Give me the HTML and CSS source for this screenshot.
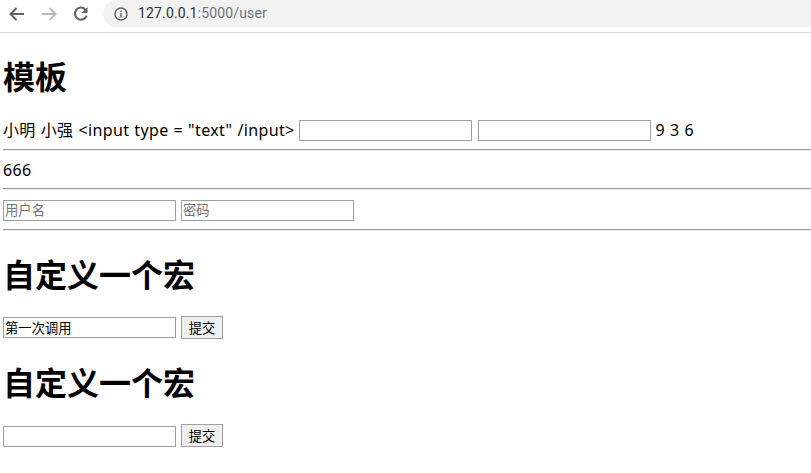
FILE: index.html
```html
<!DOCTYPE html>
<html lang="zh">
<head>
<meta charset="utf-8">
<title>user</title>
<link rel="stylesheet" href="styles.css">
</head>
<body>
<header class="toolbar">
  <svg class="nav-icon" viewBox="0 0 16 16"><path d="M15 8H1.5M7.5 2 1.5 8l6 6" class="stroke-dark"/></svg>
  <svg class="nav-icon" viewBox="0 0 16 16"><path d="M1 8h13.5M8.5 2l6 6-6 6" class="stroke-light"/></svg>
  <svg class="nav-icon" viewBox="0 0 16 16"><path d="M13.6 9.6A6 6 0 1 1 12.4 3.6" class="stroke-dark"/><path d="M14.5 1v6h-6z" class="fill-dark"/></svg>
  <div class="omnibox">
    <svg class="info-icon" viewBox="0 0 14 14"><circle cx="7" cy="7" r="6" class="stroke-info"/><path d="M7 6.2v4M7 3.6v1.5" class="stroke-info"/></svg>
    <span class="url"><span class="host">127.0.0.1</span>:5000/user</span>
  </div>
</header>
<main class="page">
  <h1>模板</h1>
  <div class="line"><span class="spaced">小明 小强 &lt;input type = "text" /input&gt;</span> <input type="text" class="field"> <input type="text" class="field"> <span class="spaced">9 3 6</span></div>
  <hr>
  <div class="line-plain"><span class="spaced">666</span></div>
  <hr>
  <div class="row row-fields"><input type="text" class="field" placeholder="用户名"><input type="text" class="field" placeholder="密码"></div>
  <hr>
  <h1>自定义一个宏</h1>
  <form class="row row-filled"><input type="text" class="field" value="第一次调用"><button type="button" class="submit">提交</button></form>
  <h1>自定义一个宏</h1>
  <form class="row row-empty"><input type="text" class="field"><button type="button" class="submit">提交</button></form>
</main>
</body>
</html>
```
FILE: styles.css
```css
html, body {
  margin: 0;
  padding: 0;
  background: #fff;
  overflow: hidden;
}
body {
  font-family: "Noto Sans", "Noto Sans CJK SC", sans-serif;
  font-size: 16px;
  line-height: 21px;
  color: #000;
}
.toolbar {
  height: 32px;
  display: flex;
  align-items: flex-start;
  border-bottom: 1px solid #dcdcdc;
}
.nav-icon {
  width: 16px;
  height: 16px;
  margin: 6px 7px 0 9px;
  flex: none;
}
.stroke-dark { fill: none; stroke: #5f6368; stroke-width: 2; }
.stroke-light { fill: none; stroke: #b9bbbe; stroke-width: 2; }
.fill-dark { fill: #5f6368; }
.stroke-info { fill: none; stroke: #5f6368; stroke-width: 1.5; }
.omnibox {
  flex: 1;
  height: 27px;
  margin-left: 7px;
  padding-left: 11px;
  background: #f2f2f2;
  border-radius: 14px 0 0 14px;
  display: flex;
  align-items: center;
  gap: 10px;
}
.info-icon { width: 14px; height: 14px; flex: none; }
.url {
  font-family: "Roboto", "Liberation Sans", sans-serif;
  font-size: 14px;
  letter-spacing: 0.15px;
  color: #70757a;
}
.host { color: #303134; }
.page { padding: 0 0 0 3px; }
h1 {
  font-size: 32px;
  line-height: 42px;
  font-weight: bold;
  margin: 21.44px 0 19.44px;
  padding-top: 2px;
}
.line { height: 21px; padding-top: 2px; }
.line .field { vertical-align: 1px; margin: 0 0.5px 0 0.7px; }
.line-plain { height: 20px; padding-top: 1px; }
.spaced { letter-spacing: 0.36px; word-spacing: 0.5px; }
hr {
  margin: 8px 0;
  border: 0;
  border-top: 1px solid #9a9a9a;
  border-bottom: 1px solid #eee;
}
.row { display: flex; gap: 5px; }
.row-fields { padding-top: 2px; }
.row-filled { align-items: center; }
.row-empty { align-items: flex-end; }
.field {
  width: 173px;
  height: 21px;
  box-sizing: border-box;
  border: 1px solid #a0a0a0;
  padding: 1px;
  margin: 0;
  font-family: "Liberation Sans", "Noto Sans CJK SC", sans-serif;
  font-size: 13.33px;
  background: #fff;
}
.field::placeholder { color: #757575; }
.submit {
  width: 42px;
  height: 23px;
  padding: 0;
  border: 1px solid #a0a0a0;
  background: #efefef;
  font-family: "Liberation Sans", "Noto Sans CJK SC", sans-serif;
  font-size: 13.33px;
  color: #000;
}
```
